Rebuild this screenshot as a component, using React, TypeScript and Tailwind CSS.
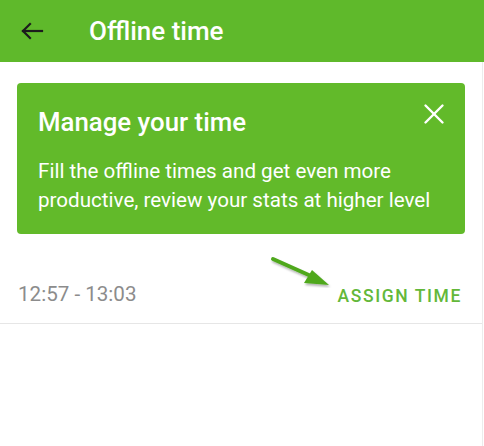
import { X } from 'lucide-react'

function BackArrow() {
  return (
    <svg width="24" height="18" viewBox="0 0 24 18" fill="none" stroke="#1c1c1c" strokeWidth="2.2" strokeLinecap="square">
      <path d="M2 9h19" />
      <path d="M9 2 2 9l7 7" />
    </svg>
  )
}

function PointerArrow() {
  return (
    <svg width="70" height="34" viewBox="0 0 70 34" className="absolute left-[268px] top-[254px]">
      <defs>
        <filter id="sh" x="-20%" y="-20%" width="140%" height="160%">
          <feDropShadow dx="1" dy="2" stdDeviation="1.2" floodColor="#000" floodOpacity="0.3" />
        </filter>
      </defs>
      <g filter="url(#sh)">
        <path d="M5 5 L43 22" stroke="#4fa81f" strokeWidth="4" strokeLinecap="round" />
        <path d="M44 16 L61 31 L36 29 Z" fill="#4fa81f" />
      </g>
    </svg>
  )
}

export default function App() {
  return (
    <div className="relative w-[484px] h-[446px] bg-white" style={{ fontFamily: 'Roboto, "Liberation Sans", sans-serif' }}>
      <header className="h-[62px] bg-[#5fb92b] flex items-center">
        <div className="w-[89px] pl-[21px] flex items-center">
          <BackArrow />
        </div>
        <h1 className="text-white text-[26px] font-medium leading-none">Offline time</h1>
      </header>

      <div className="w-[483px] h-[384px] border-r border-[#ececec]">
        <div className="px-[17px] pt-[21px]">
          <div className="bg-[#62ba2a] rounded-[4px] h-[151px] pl-[21px] pr-[20px] pt-[21px] relative">
            <div className="flex justify-between items-start">
              <h2 className="text-white text-[25.8px] font-medium leading-[36px]">Manage your time</h2>
              <X className="text-white mt-[-7px] mr-[-6px]" size={34} strokeWidth={1.7} />
            </div>
            <p className="mt-[17px] text-white text-[20.6px] leading-[29px]">
              Fill the offline times and get even more productive, review your stats at higher level
            </p>
          </div>
        </div>

        <div className="h-[90px] border-b border-[#e6e6e6] flex items-end justify-between pl-[18px] pr-[20px] pb-[18px]">
          <span className="text-[#8c8c8c] text-[20.6px] leading-none">12:57 - 13:03</span>
          <span className="text-[#63b83a] text-[17.5px] font-medium tracking-[1.6px] leading-none">ASSIGN TIME</span>
        </div>
      </div>

      <PointerArrow />
    </div>
  )
}
